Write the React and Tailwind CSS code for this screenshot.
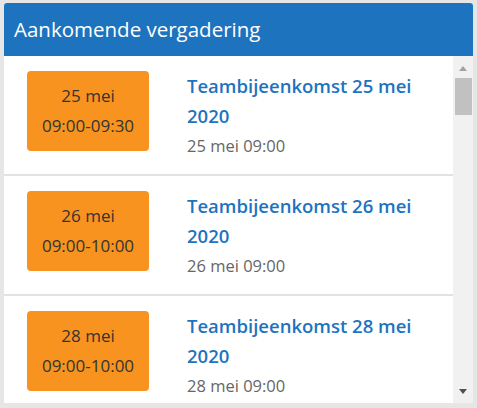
const meetings = [
  { day: "25 mei", time: "09:00-09:30", title: "Teambijeenkomst 25 mei 2020", start: "25 mei 09:00" },
  { day: "26 mei", time: "09:00-10:00", title: "Teambijeenkomst 26 mei 2020", start: "26 mei 09:00" },
  { day: "28 mei", time: "09:00-10:00", title: "Teambijeenkomst 28 mei 2020", start: "28 mei 09:00" },
];

function MeetingRow({ meeting }) {
  return (
    <div className="flex shrink-0 border-b-2 border-[#e2e2e2] pt-[15px] pb-[13px] pl-[23px] pr-[10px]">
      <div className="flex h-[80px] w-[122px] shrink-0 flex-col items-center justify-center rounded-[4px] bg-[#f7931e] text-[17px] leading-[30px] text-[#333]">
        <span>{meeting.day}</span>
        <span>{meeting.time}</span>
      </div>
      <div className="ml-[38px] min-w-0 flex-1">
        <div className="text-[18.5px] font-semibold leading-[30px] text-[#1e73be]">{meeting.title}</div>
        <div className="text-[16.5px] leading-[30px] text-[#666]">{meeting.start}</div>
      </div>
    </div>
  );
}

function FakeScrollbar() {
  return (
    <div className="flex w-[20px] shrink-0 flex-col items-center bg-[#f1f1f1]">
      <div className="mt-[10px] h-0 w-0 border-x-[4.5px] border-b-[5px] border-x-transparent border-b-[#a3a3a3]" />
      <div className="mt-[7px] ml-[1px] h-[37px] w-[17px] bg-[#c1c1c1]" />
      <div className="mt-auto mb-[9px] h-0 w-0 border-x-[4.5px] border-t-[5px] border-x-transparent border-t-[#505050]" />
    </div>
  );
}

export default function App() {
  return (
    <div
      className="h-[408px] w-[477px] bg-[#e6e6e6] px-[4px] pt-[3px]"
      style={{ fontFamily: '"Open Sans", "Noto Sans", sans-serif' }}
    >
      <div className="flex h-[400px] flex-col overflow-hidden rounded-t-[3px] bg-white">
        <div className="flex h-[53px] shrink-0 items-center bg-[#1e73be] px-[10px] text-[20.5px] text-white">
          Aankomende vergadering
        </div>
        <div className="flex min-h-0 flex-1">
          <div className="flex min-w-0 flex-1 flex-col overflow-hidden">
            {meetings.map((meeting) => (
              <MeetingRow key={meeting.day} meeting={meeting} />
            ))}
          </div>
          <FakeScrollbar />
        </div>
      </div>
    </div>
  );
}
